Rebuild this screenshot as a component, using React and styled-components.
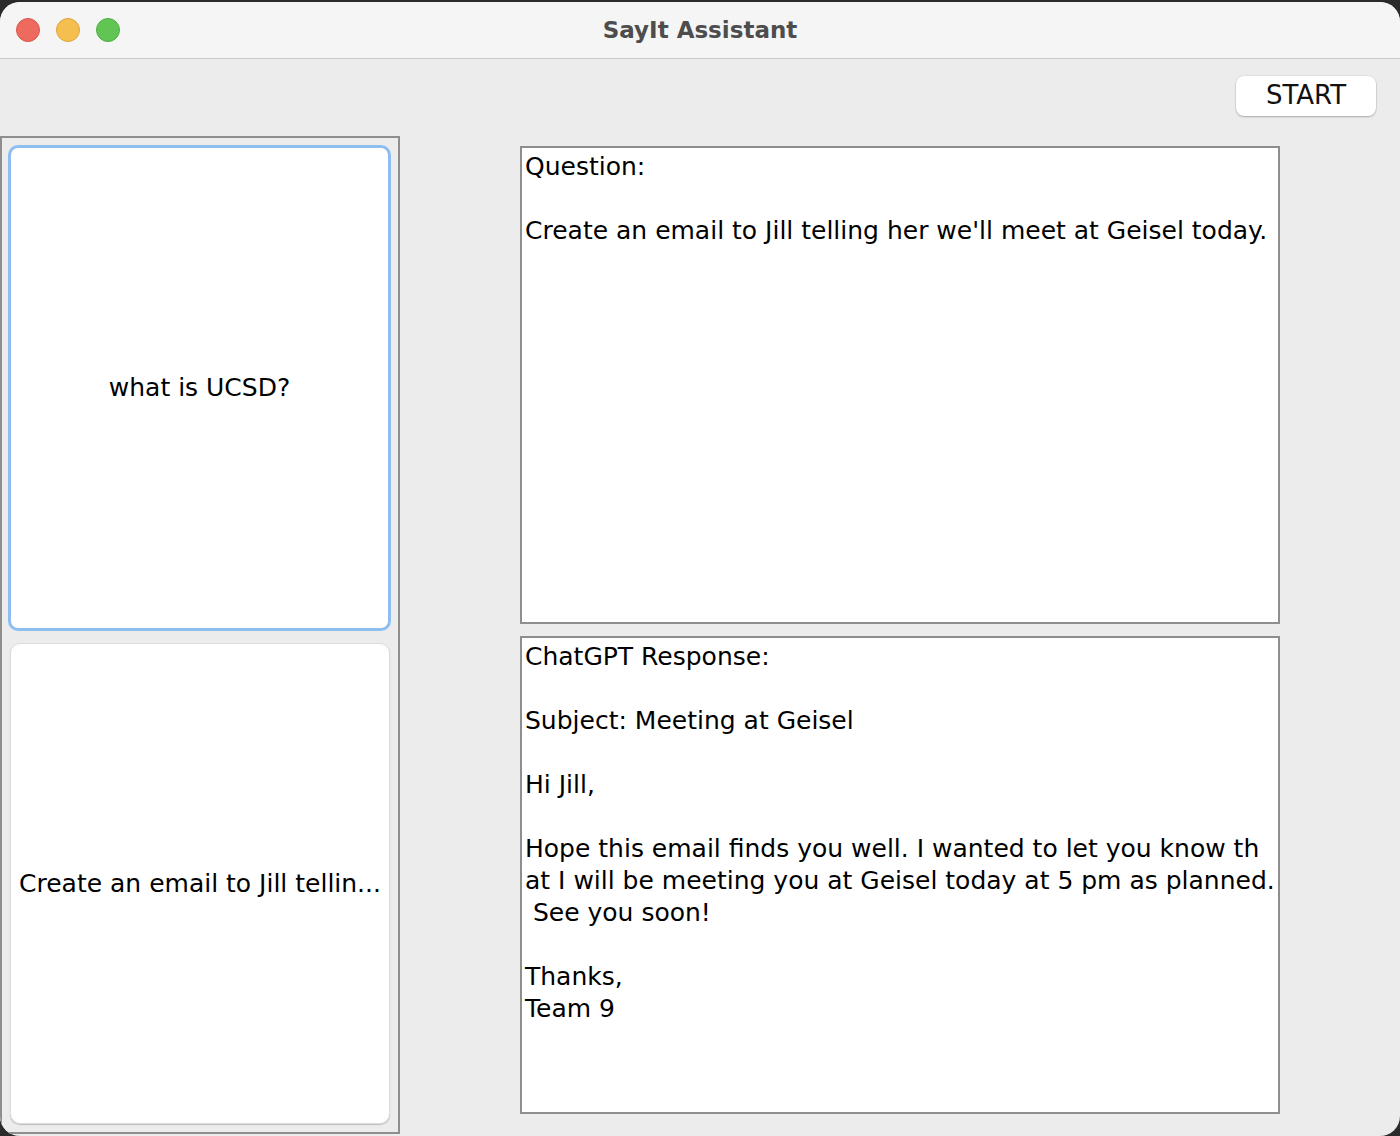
import React from "react";
import styled, { createGlobalStyle } from "styled-components";

const GlobalStyle = createGlobalStyle`
  html, body {
    margin: 0;
    padding: 0;
    background: #2b2b2b;
  }
  #root {
    width: 1400px;
    height: 1136px;
  }
`;

const Window = styled.div`
  width: 1400px;
  height: 1134px;
  margin-top: 2px;
  background: #ececec;
  border-radius: 20px;
  overflow: hidden;
  display: flex;
  flex-direction: column;
  font-family: "DejaVu Sans", "Liberation Sans", sans-serif;
`;

const TitleBar = styled.div`
  height: 56px;
  flex-shrink: 0;
  background: #f5f5f5;
  border-bottom: 1px solid #c9c9c9;
  display: flex;
  align-items: center;
  position: relative;
  padding-left: 16px;
`;

const Lights = styled.div`
  display: flex;
  gap: 16px;
`;

const Light = styled.span`
  width: 22px;
  height: 22px;
  border-radius: 50%;
  background: ${(p) => p.$color};
  border: 1px solid ${(p) => p.$edge};
`;

const Title = styled.div`
  position: absolute;
  left: 0;
  right: 0;
  top: 0;
  bottom: 0;
  display: flex;
  align-items: center;
  justify-content: center;
  font-family: "DejaVu Sans", sans-serif;
  font-weight: bold;
  font-size: 23px;
  color: #4d4d4d;
  pointer-events: none;
`;

const Toolbar = styled.div`
  height: 77px;
  flex-shrink: 0;
  display: flex;
  justify-content: flex-end;
  align-items: flex-start;
  padding: 17px 24px 0 0;
  box-sizing: border-box;
`;

const StartButton = styled.button`
  width: 140px;
  height: 40px;
  background: #fff;
  border: none;
  border-radius: 8px;
  box-shadow: 0 1px 2px rgba(0, 0, 0, 0.25), 0 0 0 0.5px rgba(0, 0, 0, 0.08);
  font-family: "DejaVu Sans", sans-serif;
  font-size: 26px;
  color: #111;
  padding: 0 0 3px 0;
  cursor: pointer;
`;

const Main = styled.div`
  flex: 1;
  display: flex;
  align-items: flex-start;
`;

const HistoryPanel = styled.div`
  width: 400px;
  height: 998px;
  box-sizing: border-box;
  border: 2px solid #8e8e8e;
  background: #ececec;
  display: flex;
  flex-direction: column;
  gap: 12px;
  padding: 7px 7px 8px 6px;
`;

const HistoryCard = styled.div`
  flex: 1;
  background: #fff;
  border-radius: 10px;
  box-sizing: border-box;
  border: ${(p) => (p.$selected ? "3px solid #8ebdf2" : "1px solid #dcdcdc")};
  box-shadow: ${(p) => (p.$selected ? "none" : "0 1px 1px rgba(0,0,0,0.2)")};
  margin: ${(p) => (p.$selected ? "0" : "0 1px 0 2px")};
  display: flex;
  align-items: center;
  justify-content: center;
  font-size: 25px;
  color: #000;
  white-space: nowrap;
`;

const RightColumn = styled.div`
  margin-left: 120px;
  margin-top: 10px;
  width: 760px;
  display: flex;
  flex-direction: column;
  gap: 12px;
`;

const TextBox = styled.div`
  height: 478px;
  box-sizing: border-box;
  border: 2px solid #8e8e8e;
  background: #fff;
  padding: 3px 3px;
  font-size: 25px;
  line-height: 32px;
  color: #000;
  white-space: pre;
  overflow: hidden;
`;

const questionText = `Question:

Create an email to Jill telling her we'll meet at Geisel today.`;

const responseText = `ChatGPT Response:

Subject: Meeting at Geisel

Hi Jill,

Hope this email finds you well. I wanted to let you know th
at I will be meeting you at Geisel today at 5 pm as planned.
 See you soon!

Thanks,
Team 9`;

export default function App() {
  return (
    <>
      <GlobalStyle />
      <Window>
        <TitleBar>
          <Lights>
            <Light $color="#ee6a5f" $edge="#d9574c" />
            <Light $color="#f5bf4f" $edge="#dea33b" />
            <Light $color="#61c554" $edge="#50ad43" />
          </Lights>
          <Title>SayIt Assistant</Title>
        </TitleBar>
        <Toolbar>
          <StartButton>START</StartButton>
        </Toolbar>
        <Main>
          <HistoryPanel>
            <HistoryCard $selected>what is UCSD?</HistoryCard>
            <HistoryCard>Create an email to Jill tellin...</HistoryCard>
          </HistoryPanel>
          <RightColumn>
            <TextBox>{questionText}</TextBox>
            <TextBox>{responseText}</TextBox>
          </RightColumn>
        </Main>
      </Window>
    </>
  );
}
